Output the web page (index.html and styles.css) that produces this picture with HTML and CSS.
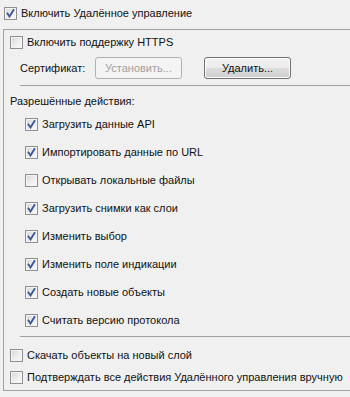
FILE: index.html
```html
<!DOCTYPE html>
<html lang="ru">
<head>
    <meta charset="UTF-8">
    <title>Удалённое управление</title>
    <link rel="stylesheet" href="styles.css">
</head>
<body>
    <div class="row row-top">
        <span class="cb checked"><svg viewBox="0 0 11 11"><path d="M2.5 5.5 L4.5 8.5 L8.5 2"/></svg></span>
        <span class="label">Включить Удалённое управление</span>
    </div>

    <div class="panel">
        <div class="row row-https">
            <span class="cb"></span>
            <span class="label">Включить поддержку HTTPS</span>
        </div>

        <div class="row row-cert">
            <span class="cert-label">Сертификат:</span>
            <button class="btn btn-disabled" type="button" disabled>Установить...</button>
            <button class="btn" type="button">Удалить...</button>
        </div>

        <div class="separator"></div>

        <div class="row section-title">Разрешённые действия:</div>

        <!-- Список разрешённых действий -->
        <div class="actions">
            <div class="row item">
                <span class="cb checked"><svg viewBox="0 0 11 11"><path d="M2.5 5.5 L4.5 8.5 L8.5 2"/></svg></span>
                <span class="label">Загрузить данные API</span>
            </div>
            <div class="row item">
                <span class="cb checked"><svg viewBox="0 0 11 11"><path d="M2.5 5.5 L4.5 8.5 L8.5 2"/></svg></span>
                <span class="label">Импортировать данные по URL</span>
            </div>
            <div class="row item">
                <span class="cb"></span>
                <span class="label">Открывать локальные файлы</span>
            </div>
            <div class="row item">
                <span class="cb checked"><svg viewBox="0 0 11 11"><path d="M2.5 5.5 L4.5 8.5 L8.5 2"/></svg></span>
                <span class="label">Загрузить снимки как слои</span>
            </div>
            <div class="row item">
                <span class="cb checked"><svg viewBox="0 0 11 11"><path d="M2.5 5.5 L4.5 8.5 L8.5 2"/></svg></span>
                <span class="label">Изменить выбор</span>
            </div>
            <div class="row item">
                <span class="cb checked"><svg viewBox="0 0 11 11"><path d="M2.5 5.5 L4.5 8.5 L8.5 2"/></svg></span>
                <span class="label">Изменить поле индикации</span>
            </div>
            <div class="row item">
                <span class="cb checked"><svg viewBox="0 0 11 11"><path d="M2.5 5.5 L4.5 8.5 L8.5 2"/></svg></span>
                <span class="label">Создать новые объекты</span>
            </div>
            <div class="row item">
                <span class="cb checked"><svg viewBox="0 0 11 11"><path d="M2.5 5.5 L4.5 8.5 L8.5 2"/></svg></span>
                <span class="label">Считать версию протокола</span>
            </div>
        </div>

        <div class="separator separator-bottom"></div>

        <div class="row row-bottom">
            <span class="cb"></span>
            <span class="label">Скачать объекты на новый слой</span>
        </div>
        <div class="row row-bottom">
            <span class="cb"></span>
            <span class="label">Подтверждать все действия Удалённого управления вручную</span>
        </div>
    </div>
</body>
</html>
```

FILE: styles.css
```css
html, body {
    overflow: hidden;
}

body {
    margin: 0;
    width: 350px;
    height: 397px;
    background-color: #f0f0f0;
    font-family: 'Liberation Sans', Arial, sans-serif;
    font-size: 11px;
    color: #111;
}

.row {
    display: flex;
    align-items: center;
    white-space: nowrap;
}

/* Чекбоксы */
.cb {
    box-sizing: border-box;
    width: 13px;
    height: 13px;
    flex: none;
    border: 1px solid #8e8f8f;
    background: linear-gradient(135deg, #d6d6d6 0%, #eeeeee 55%, #fbfbfb 100%);
    box-shadow: inset 0 0 0 1px #f4f4f4;
    margin-right: 4px;
}

.cb svg {
    display: block;
    width: 11px;
    height: 11px;
}

.cb svg path {
    fill: none;
    stroke: #3d5a98;
    stroke-width: 1.9;
    stroke-linecap: square;
}

.row-top {
    height: 26px;
    padding-left: 4px;
}

/* Рамка группы */
.panel {
    margin: 3px 0 0 3px;
    border: 1px solid #a0a0a0;
    border-right: none;
    padding: 0 0 2px 6px;
}

.row-https {
    height: 24px;
}

.row-cert {
    height: 28px;
    padding-left: 10px;
}

.cert-label {
    width: 75px;
}

.btn {
    box-sizing: border-box;
    height: 22px;
    width: 87px;
    margin: 0;
    padding: 0;
    border: 1px solid #707070;
    border-radius: 3px;
    font-family: inherit;
    font-size: 11px;
    color: #111;
    background: linear-gradient(#f2f2f2 0%, #ebebeb 50%, #dddddd 51%, #cfcfcf 100%);
    box-shadow: inset 0 0 0 1px #fcfcfc;
}

.btn-disabled {
    border-color: #adb2b5;
    background: #f4f4f4;
    color: #a0a0a0;
    box-shadow: none;
    margin-right: 22px;
}

.separator {
    height: 1px;
    background-color: #a0a0a0;
    margin: 3px 0 0 10px;
}

.section-title {
    height: 18px;
    margin-top: 6px;
}

.item {
    height: 28px;
    padding-left: 15px;
}

.separator-bottom {
    margin-top: 2px;
}

.row-bottom {
    height: 22px;
}

.separator-bottom + .row-bottom {
    margin-top: 7px;
}
```
